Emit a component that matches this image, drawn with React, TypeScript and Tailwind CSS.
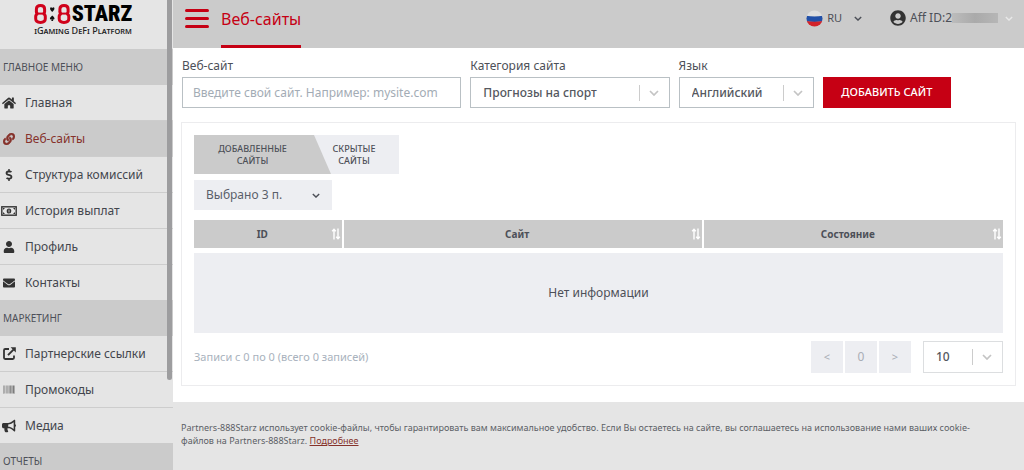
import type { ComponentType, ReactNode } from "react";
import {
  FaHome,
  FaLink,
  FaDollarSign,
  FaUser,
  FaEnvelope,
  FaBarcode,
  FaBullhorn,
  FaUserCircle,
} from "react-icons/fa";

type IconType = ComponentType<{ className?: string }>;

function MoneyIcon({ className }: { className?: string }) {
  return (
    <svg viewBox="0 0 16 10" className={className} aria-hidden="true">
      <rect x="0.8" y="0.8" width="14.4" height="8.4" fill="none" stroke="currentColor" strokeWidth="1.4" />
      <ellipse cx="8" cy="5" rx="2.3" ry="2.6" fill="currentColor" />
      <path d="M2 2h2L2 4zM14 2h-2l2 2zM2 8h2L2 6zM14 8h-2l2-2z" fill="currentColor" />
      <path d="M8 3.6v2.8" stroke="#e5e5e5" strokeWidth="0.8" />
    </svg>
  );
}

function ShareIcon({ className }: { className?: string }) {
  return (
    <svg viewBox="0 0 13 13" className={className} aria-hidden="true">
      <path
        d="M6 2H2.2Q1 2 1 3.2v7.6Q1 12 2.2 12h7.6Q11 12 11 10.8V8.5"
        fill="none"
        stroke="currentColor"
        strokeWidth="1.8"
      />
      <path d="M5 8.2 10.5 2.7" fill="none" stroke="currentColor" strokeWidth="1.9" />
      <path d="M7.6 0.2H12.8V5.4z" fill="currentColor" />
    </svg>
  );
}

type Item = { label: string; icon: IconType; size?: string; active?: boolean };

const mainMenu: Item[] = [
  { label: "Главная", icon: FaHome, size: "size-[14px]" },
  { label: "Веб-сайты", icon: FaLink, size: "size-3 stroke-current stroke-[20px]", active: true },
  { label: "Структура комиссий", icon: FaDollarSign },
  { label: "История выплат", icon: MoneyIcon, size: "h-[10px] w-4" },
  { label: "Профиль", icon: FaUser },
  { label: "Контакты", icon: FaEnvelope },
];

const marketing: Item[] = [
  { label: "Партнерские ссылки", icon: ShareIcon, size: "size-[13px]" },
  { label: "Промокоды", icon: FaBarcode, size: "h-[11px] w-[14px] opacity-80" },
  { label: "Медиа", icon: FaBullhorn, size: "size-[14px]" },
];

function Chevron({ className }: { className: string }) {
  return (
    <svg viewBox="0 0 10 6" className={className} fill="none" stroke="currentColor" aria-hidden="true">
      <path d="M1 1l4 4 4-4" strokeWidth="1.7" />
    </svg>
  );
}

function Eight({ x }: { x: number }) {
  return (
    <g transform={`translate(${x} 0)`} fill="none" stroke="#d0021b" strokeWidth="3">
      <path d="M2.4 8V5Q2.4 1.6 6.5 1.6T10.6 5V8Q10.6 9.4 9 9.8" />
      <path d="M2.4 7.8Q2.4 9.4 4 9.8" />
      <path d="M3.4 9.6H9.6" strokeWidth="2" />
      <path d="M4 9.6Q1.700 10.4 1.7 12.4V14.8Q1.7 18.4 6.5 18.4T11.3 14.8V12.4Q11.3 10.4 9 9.6" />
    </g>
  );
}

function Logo() {
  return (
    <a href="#" className="flex h-[49px] shrink-0 flex-col items-center pt-1 pr-[7px] text-black">
      <span className="flex h-5 items-center">
        <svg viewBox="0 0 37 20" className="mr-px h-5 w-[37px]" aria-hidden="true">
          <Eight x={0} />
          <Eight x={23.5} />
          <path d="M16.2 3.7Q17.1 2.8 18.2 4 19.4 2.8 20.3 3.7 21 5.4 18.2 8 15.5 5.4 16.2 3.7z" fill="#111" />
          <path
            d="M18.2 11.4Q21 13.6 20.4 15 19.6 15.9 18.6 15.2L19.3 17H17.2L17.9 15.2Q16.9 15.9 16.1 15 15.5 13.6 18.2 11.4z"
            fill="#111"
          />
        </svg>
        <span className="font-['Roboto_Condensed','Open_Sans_Condensed','Noto_Sans_Condensed',Roboto,sans-serif] text-[22px] leading-5 font-black">
          STARZ
        </span>
      </span>
      <span className="mt-px text-[9px] leading-[11px] font-medium whitespace-nowrap text-[#222] [font-variant-caps:small-caps]">
        iGaming DeFi Platform
      </span>
    </a>
  );
}

function MenuHeading({ children }: { children: ReactNode }) {
  return (
    <h2 className="flex h-9 shrink-0 items-center bg-[#cbcbcb] px-[3px] text-[10px] text-[#4d5058]">{children}</h2>
  );
}

function MenuList({ items }: { items: Item[] }) {
  return (
    <ul>
      {items.map(({ label, icon: Icon, size, active }) => (
        <li key={label} className="border-b border-[#cdcdcd] last:border-b-0">
          <a
            href="#"
            className={
              active
                ? "flex h-[35px] items-center gap-2 bg-[#cbcbcb] pl-px text-[12px] text-[#86322b]"
                : "flex h-[35px] items-center gap-2 pl-px text-[12px] text-[#43464d]"
            }
          >
            <span className={active ? "flex w-4 justify-center" : "flex w-4 justify-center text-[#333]"}>
              <Icon className={size ?? "size-3"} />
            </span>
            {label}
          </a>
        </li>
      ))}
    </ul>
  );
}

function SelectBox({ id, options, light, label }: { id: string; options: string[]; light?: boolean; label?: string }) {
  return (
    <div
      className={
        light
          ? "relative flex h-8 items-center border border-[#dcdee0]"
          : "relative flex h-[31px] items-center border border-[#b9c0c4]"
      }
    >
      <select
        id={id}
        aria-label={label}
        className="h-full w-full appearance-none bg-transparent pr-8 pl-3 text-[12px] font-medium text-[#555860] outline-none"
      >
        {options.map((o) => (
          <option key={o}>{o}</option>
        ))}
      </select>
      <span className="pointer-events-none absolute inset-y-0 right-0 flex w-[30px] items-center justify-center">
        <span className="absolute left-0 h-4 w-px bg-[#cccccc]" />
        <Chevron className="h-[6px] w-[10px] text-[#c4c4c4]" />
      </span>
    </div>
  );
}

function SortIcon() {
  return (
    <svg
      viewBox="0 0 10 12"
      className="h-3 w-[10px] shrink-0"
      fill="none"
      stroke="#fff"
      strokeWidth="1.4"
      aria-hidden="true"
    >
      <path d="M3 11.5V1.5M1.2 3.2 3 1.2 4.8 3.2M7 .5v10M5.2 8.8 7 10.8 8.8 8.8" />
    </svg>
  );
}

function Flag() {
  return (
    <svg viewBox="0 0 18 18" className="size-[17px]" aria-hidden="true">
      <defs>
        <clipPath id="flag-round">
          <circle cx="9" cy="9" r="8.5" />
        </clipPath>
      </defs>
      <g clipPath="url(#flag-round)">
        <path d="M0 0h18v7H0z" fill="#dedede" />
        <path d="M0 6.2q9 1.4 18 0V12q-9 1.5-18 0z" fill="#2150a8" />
        <path d="M0 11.7q9 1.6 18 0V18H0z" fill="#d2232a" />
      </g>
    </svg>
  );
}

const columns = ["ID", "Сайт", "Состояние"];

export default function App() {
  return (
    <div className="flex h-screen overflow-hidden bg-white font-['Noto_Sans','Open_Sans',sans-serif] text-[#4d5058]">
      <aside className="relative flex w-[173px] shrink-0 flex-col overflow-hidden bg-[#e5e5e5]">
        <Logo />
        <nav>
          <MenuHeading>ГЛАВНОЕ МЕНЮ</MenuHeading>
          <MenuList items={mainMenu} />
          <MenuHeading>МАРКЕТИНГ</MenuHeading>
          <MenuList items={marketing} />
          <MenuHeading>ОТЧЕТЫ</MenuHeading>
        </nav>
        <span className="absolute top-0 right-[1px] h-[380px] w-[5px] rounded-b-full bg-[#9d9d9f]" />
      </aside>

      <div className="flex min-w-0 flex-1 flex-col">
        <header className="flex h-12 shrink-0 items-center bg-[#cbcbcb] pr-[11px] pl-3">
          <button aria-label="Меню" className="mb-3 flex w-6 flex-col gap-[5px]">
            <span className="h-[3px] rounded-full bg-[#c60014]" />
            <span className="h-[3px] rounded-full bg-[#c60014]" />
            <span className="h-[3px] rounded-full bg-[#c60014]" />
          </button>
          <h1 className="ml-3 flex h-full items-center border-b-3 border-[#c60014] pb-2 text-base text-[#c60014]">
            Веб-сайты
          </h1>
          <button className="mb-3 ml-auto flex items-center gap-1 text-[11px]">
            <Flag />
            RU
            <Chevron className="ml-2 h-[5px] w-2" />
          </button>
          <button className="mb-3 ml-7 flex items-center gap-1 text-[12px]">
            <FaUserCircle className="size-4 text-[#333]" />
            <span className="flex items-center">
              Aff ID:2
              <span className="h-[10px] w-[46px] bg-linear-to-r from-[#bcbcbc] via-[#aaaaaa] to-[#b6b6b6]" />
            </span>
            <Chevron className="ml-[3px] h-[5px] w-2 text-[#e8e8e8]" />
          </button>
        </header>

        <main className="px-2 pt-[9px] pb-4">
          <form
            className="grid grid-cols-[279fr_199fr_135fr_128fr_56fr] items-end gap-[9px] pl-px"
            onSubmit={(e) => e.preventDefault()}
          >
            <div>
              <label htmlFor="site" className="block h-5 text-[12px] leading-[18px]">
                Веб-сайт
              </label>
              <input
                id="site"
                type="text"
                placeholder="Введите свой сайт. Например: mysite.com"
                className="h-[31px] w-full border border-[#b9c0c4] px-[10px] text-[12px] outline-none placeholder:text-[#a3acb5]"
              />
            </div>
            <div>
              <label htmlFor="category" className="block h-5 text-[12px] leading-[18px]">
                Категория сайта
              </label>
              <SelectBox id="category" options={["Прогнозы на спорт"]} />
            </div>
            <div>
              <label htmlFor="language" className="block h-5 text-[12px] leading-[18px]">
                Язык
              </label>
              <SelectBox id="language" options={["Английский"]} />
            </div>
            <button className="h-[31px] bg-[#c60014] text-[11px] font-medium whitespace-nowrap text-white">
              ДОБАВИТЬ САЙТ
            </button>
          </form>

          <section className="mt-[14px] border border-[#ececee] p-3">
            <div className="flex w-[205px] bg-[#edeef2] text-center text-[9px] leading-3">
              <button className="flex h-[39px] w-[137px] items-center justify-center bg-[#cbcbcb] pr-5 font-medium [clip-path:polygon(0_0,120px_0,100%_100%,0_100%)]">
                ДОБАВЛЕННЫЕ
                <br />
                САЙТЫ
              </button>
              <button className="h-[39px] w-[46px] font-medium">
                СКРЫТЫЕ
                <br />
                САЙТЫ
              </button>
            </div>
            <div className="relative mt-[6px] flex w-[138px] items-center bg-[#edeef2]">
              <select
                aria-label="Столбцы"
                className="h-[30px] w-full appearance-none bg-transparent px-3 text-[12px] text-[#5a5f6a] outline-none"
              >
                <option>Выбрано 3 п.</option>
              </select>
              <Chevron className="pointer-events-none absolute right-3 h-[5px] w-2" />
            </div>

            <table className="mt-[10px] w-full table-fixed border-separate border-spacing-0 text-[11px]">
              <colgroup>
                <col className="w-[18.5%]" />
                <col className="w-[44.5%]" />
                <col />
              </colgroup>
              <thead>
                <tr>
                  {columns.map((c) => (
                    <th
                      key={c}
                      className="h-[28px] border-r-2 border-white bg-[#cbcbcb] p-0 text-[10px] font-bold last:border-r-0"
                    >
                      <span className="flex items-center pr-px">
                        <span className="flex-1">{c}</span>
                        <SortIcon />
                      </span>
                    </th>
                  ))}
                </tr>
              </thead>
              <tbody>
                <tr>
                  <td colSpan={3} className="h-[85px] border-t-5 border-white bg-[#edeef2] p-0 text-center text-[12px]">
                    Нет информации
                  </td>
                </tr>
              </tbody>
            </table>

            <div className="mt-2 flex items-center">
              <p className="text-[11px] text-[#a9b2bd]">Записи с 0 по 0 (всего 0 записей)</p>
              <div className="ml-auto flex gap-[2px] text-[11px] text-[#a9adb5]">
                <button aria-label="Назад" className="h-8 w-8 bg-[#edeef2]">
                  &lt;
                </button>
                <button className="h-8 w-8 bg-[#edeef2] text-[12px]">0</button>
                <button aria-label="Вперед" className="h-8 w-8 bg-[#edeef2]">
                  &gt;
                </button>
              </div>
              <div className="ml-3 w-20">
                <SelectBox id="page-size" label="Записей на странице" options={["10"]} light />
              </div>
            </div>
          </section>
        </main>

        <footer className="flex-1 bg-[#e5e5e5] pt-[19px] pr-7 pl-2 text-[9px] leading-[13px] text-[#5c5f66]">
          Partners-888Starz использует cookie-файлы, чтобы гарантировать вам максимальное удобство. Если Вы остаетесь
          на сайте, вы соглашаетесь на использование нами ваших cookie-файлов на Partners-888Starz.{" "}
          <a href="#" className="text-[#86322b] underline">
            Подробнее
          </a>
        </footer>
      </div>
    </div>
  );
}
